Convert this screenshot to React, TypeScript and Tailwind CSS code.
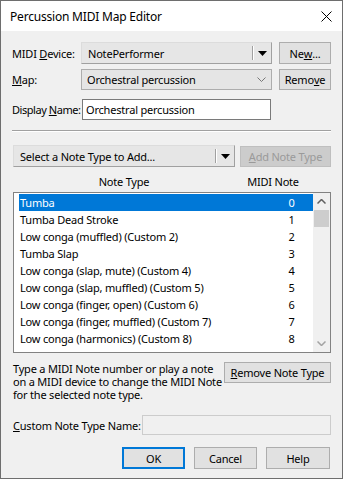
import React from "react";

const rows: [string, number][] = [
  ["Tumba", 0],
  ["Tumba Dead Stroke", 1],
  ["Low conga (muffled) (Custom 2)", 2],
  ["Tumba Slap", 3],
  ["Low conga (slap, mute) (Custom 4)", 4],
  ["Low conga (slap, muffled) (Custom 5)", 5],
  ["Low conga (finger, open) (Custom 6)", 6],
  ["Low conga (finger, muffled) (Custom 7)", 7],
  ["Low conga (harmonics) (Custom 8)", 8],
  ["Tumba Bass Tone", 9],
];

const Btn = ({ children, className = "" }: { children: React.ReactNode; className?: string }) => (
  <div className={`flex items-center justify-center border border-[#adadad] bg-[#e1e1e1] ${className}`}>{children}</div>
);

const Arrow = () => (
  <svg width="9" height="5" viewBox="0 0 9 5">
    <path d="M0 0h9L4.5 5z" fill="#000" />
  </svg>
);

const DropBtn = ({ text, w }: { text: string; w: string }) => (
  <div className={`flex h-[22px] items-center border border-[#a0a0a0] border-t-[#dcdcdc] border-l-[#dcdcdc] bg-[#e6e6e6] ${w}`}>
    <span className="flex-1 pl-[6px]">{text}</span>
    <span className="h-[14px] w-px bg-[#a0a0a0]" />
    <span className="h-[14px] w-px bg-white" />
    <span className="flex w-[17px] justify-center">
      <Arrow />
    </span>
  </div>
);

export default function App() {
  return (
    <div
      className="flex h-[479px] w-[343px] flex-col whitespace-nowrap border border-[#6e6e6e] bg-[#f0f0f0] text-[11px] leading-[15px] tracking-[-0.2px] text-black"
      style={{ fontFamily: '"Noto Sans", sans-serif' }}
    >
      <div className="flex h-[30px] items-center justify-between bg-white pl-[9px] pr-[10px] text-[12px]">
        <span>Percussion MIDI Map Editor</span>
        <svg width="11" height="11" viewBox="0 0 11 11">
          <path d="M0.5 0.5l10 10M10.5 0.5l-10 10" stroke="#000" strokeWidth="1" />
        </svg>
      </div>

      <div className="flex flex-1 flex-col px-[11px]">
        <div className="mt-[11px] flex h-[22px] items-center">
          <span className="w-[69px]">
            MIDI <u>D</u>evice:
          </span>
          <DropBtn text="NotePerformer" w="w-[191px]" />
          <Btn className="ml-[7px] h-[22px] w-[52px]">
            Ne<u>w</u>...
          </Btn>
        </div>

        <div className="mt-[5px] flex h-[21px] items-center">
          <span className="w-[69px]">
            <u>M</u>ap:
          </span>
          <div className="flex h-[21px] w-[191px] items-center border border-[#adadad] bg-[#e5e5e5]">
            <span className="flex-1 pl-[5px]">Orchestral percussion</span>
            <svg width="9" height="5" viewBox="0 0 9 5" className="mr-[5px]">
              <path d="M0.5 0.5l4 4 4-4" stroke="#777" fill="none" />
            </svg>
          </div>
          <Btn className="ml-[7px] h-[21px] w-[52px]">
            Remo<u>v</u>e
          </Btn>
        </div>

        <div className="mt-[9px] flex h-[21px] items-center">
          <span className="w-[70px] tracking-[-0.45px]">
            Display <u>N</u>ame:
          </span>
          <div className="flex h-[21px] w-[189px] items-center border border-[#7a7a7a] bg-white pl-[3px]">
            Orchestral percussion
          </div>
        </div>

        <div className="mt-[10px] h-px bg-[#a0a0a0]" />
        <div className="h-px bg-white" />

        <div className="mt-[13px] flex h-[22px] items-center">
          <DropBtn text="Select a Note Type to Add..." w="w-[222px] ml-px" />
          <div className="ml-[5px] flex h-[21px] w-[91px] items-center justify-center border border-[#bfbfbf] bg-[#cccccc] text-[#9a9a9a]">
            <u>A</u>dd Note Type
          </div>
        </div>

        <div className="mt-[4px] flex h-[20px] items-center">
          <span className="w-[224px] text-center">Note Type</span>
          <span className="w-[74px] text-center">MIDI Note</span>
        </div>

        <div className="mt-[1px] ml-px flex h-[161px] w-[318px] border border-[#828282] bg-white">
          <div className="flex-1 overflow-hidden pl-[5px] pt-px">
            {rows.map(([name, n], i) => (
              <div
                key={name}
                className={`flex h-[17px] items-center ${i === 0 ? "bg-[#0078d7] text-white" : ""}`}
              >
                <span className="flex-1 pl-px">{name}</span>
                <span className="w-[43px] text-center">{n}</span>
              </div>
            ))}
          </div>
          <div className="flex w-[17px] flex-col items-center bg-[#f0f0f0]">
            <div className="flex h-[17px] w-full items-center justify-center">
              <svg width="9" height="5" viewBox="0 0 9 5">
                <path d="M0.5 4.5l4-4 4 4" stroke="#606060" strokeWidth="1.5" fill="none" />
              </svg>
            </div>
            <div className="h-[17px] w-[15px] bg-[#cdcdcd]" />
            <div className="flex-1" />
            <div className="flex h-[17px] w-full items-center justify-center">
              <svg width="9" height="5" viewBox="0 0 9 5">
                <path d="M0.5 0.5l4 4 4-4" stroke="#a3a3a3" strokeWidth="1.5" fill="none" />
              </svg>
            </div>
          </div>
        </div>

        <div className="mt-[9px] flex">
          <p className="w-[212px] pl-px leading-[13px]">
            Type a MIDI Note number or play a note
            <br />
            on a MIDI device to change the MIDI Note
            <br />
            for the selected note type.
          </p>
          <Btn className="h-[21px] w-[107px]">
            <span>
              <u>R</u>emove Note Type
            </span>
          </Btn>
        </div>

        <div className="mt-[14px] flex h-[20px] items-center">
          <span className="w-[130px] pl-px">
            <u>C</u>ustom Note Type Name:
          </span>
          <div className="h-[20px] w-[190px] border border-[#cccccc] bg-[#f0f0f0]" />
        </div>

        <div className="mt-[12px] flex justify-end gap-[9px] pr-px">
          <div className="flex h-[22px] w-[63px] items-center justify-center border-2 border-[#0078d7] bg-[#e1e1e1]">
            OK
          </div>
          <Btn className="h-[22px] w-[63px]">Cancel</Btn>
          <Btn className="h-[22px] w-[64px]">Help</Btn>
        </div>
      </div>
    </div>
  );
}
